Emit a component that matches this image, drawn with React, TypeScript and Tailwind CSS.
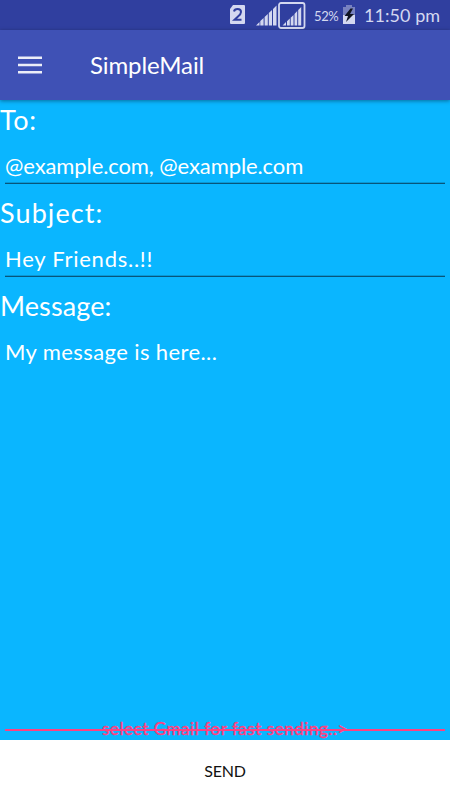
import React from 'react';

function Field({ label, labelClass, value, valueClass, line = true }: {
  label: string; labelClass: string; value: string; valueClass: string; line?: boolean;
}) {
  return (
    <div className="h-[93px]">
      <div className={`h-10 whitespace-nowrap text-[27px] leading-10 ${labelClass}`}>{label}</div>
      <div className={`mx-[5px] h-11 whitespace-nowrap pt-[5px] text-[22px] leading-[42px] ${line ? 'border-b border-[#07557a] shadow-[inset_0_-1px_0_#0998d6]' : ''} ${valueClass}`}>
        {value}
      </div>
    </div>
  );
}

export default function App() {
  return (
    <div className="flex h-[800px] w-[450px] flex-col overflow-hidden bg-[#0ab6ff] font-['Lato','Open_Sans',sans-serif] text-white">
      <div className="flex h-[30px] shrink-0 items-center bg-[#303f9f] pl-[229px] text-[#d4d8f0]">
        <svg width="17" height="20" viewBox="0 0 17 20">
          <path d="M4 0H15Q16 0 16 1V18Q16 19 15 19H2Q1 19 1 18V4Z" fill="#d4d8f0" />
          <path d="M5 6.5Q5.5 4 8.5 4Q12 4 12 7Q12 9 9 11.5L5.5 14.8H12.5" fill="none" stroke="#303f9f" strokeWidth="2" />
        </svg>
        <svg className="ml-[10px]" width="21" height="21" viewBox="0 0 21 21" fill="#d4d8f0">
          <path d="M0 20.5 3.5 17V20.5ZM4.3 16 7.6 13V20.5H4.3ZM8.6 12 11.8 9V20.5H8.6ZM12.8 8 16 5V20.5H12.8ZM17 4 20.5 0.5V20.5H17Z" />
        </svg>
        <svg className="ml-px" width="28" height="27" viewBox="0 0 28 27">
          <rect x="1" y="1" width="25.5" height="25" rx="2" fill="none" stroke="#d4d8f0" strokeWidth="1.8" />
          <path d="M4.5 23.5 8 20V23.5ZM9 19.3 11.8 16.5V23.5H9ZM12.7 15.7 15.5 13V23.5H12.7ZM16.5 12 19.2 9V23.5H16.5ZM20.2 8 23.2 5V23.5H20.2Z" fill="#d4d8f0" />
        </svg>
        <span className="ml-[8px] mt-[3px] w-[25px] whitespace-nowrap text-[13px] tracking-[-0.4px]">52%</span>
        <svg className="ml-[3px]" width="14" height="20" viewBox="0 0 14 20">
          <path d="M4 0H10V2H13V10H1V2H4Z" fill="#7882c0" />
          <path d="M1 10H13V19H1Z" fill="#d4d8f0" />
          <path d="M8.5 3.5 2.5 11H6L4 17 12 9H8L11 3.5Z" fill="#111522" />
        </svg>
        <span className="ml-[8px] mt-px whitespace-nowrap text-[18px] tracking-[0.05px]">11:50 pm</span>
      </div>
      <header className="z-10 flex h-[70px] shrink-0 items-center bg-[#3f51b5] pl-[18px] shadow-[0_1px_4px_rgba(0,0,0,0.4)]">
        <svg width="24" height="18" viewBox="0 0 24 18" fill="#eceef8">
          <path d="M0 .5H24V3.1H0ZM0 7.7H24V10.3H0ZM0 14.9H24V17.5H0Z" />
        </svg>
        <h1 className="ml-12 whitespace-nowrap text-[24px] leading-[30px] tracking-[-0.1px]">SimpleMail</h1>
      </header>
      <main className="flex grow flex-col">
        <Field label="To:" labelClass="tracking-[0.7px]" value="@example.com, @example.com" valueClass="tracking-[-0.1px]" />
        <Field label="Subject:" labelClass="tracking-[1.1px]" value="Hey Friends..!!" valueClass="tracking-[0.75px]" />
        <Field label="Message:" labelClass="tracking-[0.1px]" value="My message is here..." valueClass="tracking-[0.4px]" line={false} />
        <div className="mt-auto grid h-[22px] items-center px-[5px]">
          <div className="col-start-1 row-start-1 text-center text-[17px] leading-[22px] tracking-[0.55px] text-[#ff4081] [-webkit-text-stroke:0.4px_#ff4081]">select Gmail for fast sending..&gt;</div>
          <div className="z-10 col-start-1 row-start-1 mt-px h-[2px] bg-[#ff4081]" />
        </div>
      </main>
      <button className="h-[60px] shrink-0 bg-white pt-px text-center text-[16px] tracking-[-0.2px] text-[#111]">SEND</button>
    </div>
  );
}
